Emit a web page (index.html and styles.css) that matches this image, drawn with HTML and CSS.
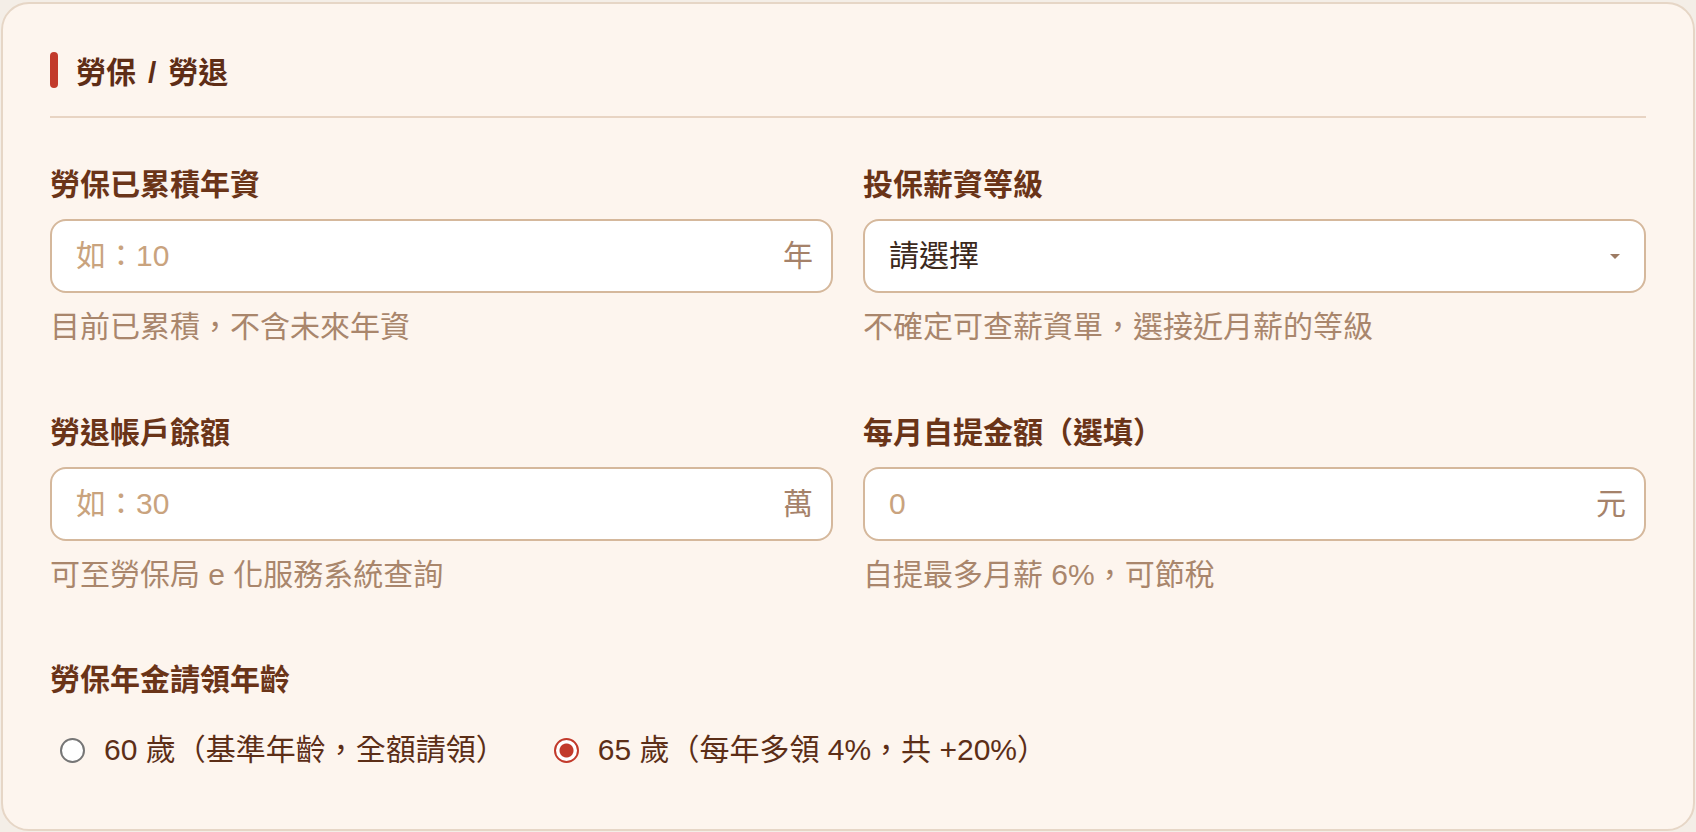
FILE: index.html
```html
<!DOCTYPE html>
<html lang="zh-Hant">
<head>
<meta charset="utf-8">
<title>勞保 / 勞退</title>
<link rel="stylesheet" href="styles.css">
</head>
<body>
<section class="card">
  <header class="card-header">
    <span class="accent-bar"></span>
    <h2 class="card-title">勞保<span class="sep">/</span>勞退</h2>
  </header>

  <div class="field-grid">
    <div class="field">
      <label class="field-label" for="years">勞保已累積年資</label>
      <div class="input-box">
        <input id="years" class="text-input" type="text" placeholder="如：10">
        <span class="suffix">年</span>
      </div>
      <p class="hint">目前已累積，不含未來年資</p>
    </div>

    <div class="field">
      <label class="field-label" for="grade">投保薪資等級</label>
      <div class="input-box">
        <select id="grade" class="select-input">
          <option>請選擇</option>
        </select>
        <svg class="select-arrow" width="10" height="5" viewBox="0 0 10 5" aria-hidden="true"><path d="M0 0H10L5 5Z"/></svg>
      </div>
      <p class="hint">不確定可查薪資單，選接近月薪的等級</p>
    </div>

    <div class="field">
      <label class="field-label" for="balance">勞退帳戶餘額</label>
      <div class="input-box">
        <input id="balance" class="text-input" type="text" placeholder="如：30">
        <span class="suffix">萬</span>
      </div>
      <p class="hint">可至勞保局 e 化服務系統查詢</p>
    </div>

    <div class="field">
      <label class="field-label" for="self">每月自提金額（選填）</label>
      <div class="input-box">
        <input id="self" class="text-input" type="text" placeholder="0">
        <span class="suffix">元</span>
      </div>
      <p class="hint">自提最多月薪 6%，可節稅</p>
    </div>
  </div>

  <div class="age-section">
    <div class="section-label">勞保年金請領年齡</div>
    <div class="radio-group">
      <label class="radio-option">
        <input class="radio" type="radio" name="age" value="60">
        <span>60 歲（基準年齡，全額請領）</span>
      </label>
      <label class="radio-option">
        <input class="radio" type="radio" name="age" value="65" checked>
        <span>65 歲（每年多領 4%，共 +20%）</span>
      </label>
    </div>
  </div>
</section>
</body>
</html>
```

FILE: styles.css
```css
* { box-sizing: border-box; }

html, body {
  margin: 0;
  padding: 0;
}

body {
  background: #f4eee7;
  font-family: "Liberation Sans", "Noto Sans CJK TC", sans-serif;
  font-size: 30px;
  line-height: 42px;
  overflow: hidden;
}

.card {
  margin: 2px 1px 0 1px;
  height: 829px;
  background: #fdf5ee;
  border: 2px solid #e6d6c6;
  border-radius: 28px;
  padding: 45px 47px 0 47px;
}

.card-header {
  display: flex;
  align-items: center;
  gap: 18px;
  padding-bottom: 25px;
  border-bottom: 2px solid #e8d4c3;
}

.accent-bar {
  width: 8px;
  height: 36px;
  border-radius: 4px;
  background: #c23a2b;
  flex: none;
}

.card-title {
  margin: 0;
  height: 42px;
  font-size: 30px;
  line-height: 48px;
  font-weight: 700;
  color: #5e2d16;
}

.sep {
  margin: 0 12px;
}

.field-grid {
  margin-top: 44px;
  display: grid;
  grid-template-columns: 1fr 1fr;
  column-gap: 30px;
  row-gap: 62px;
}

.field {
  display: flex;
  flex-direction: column;
}

.field-label,
.section-label {
  display: block;
  font-weight: 700;
  color: #6a3418;
  line-height: 42px;
}

.field-label {
  padding-top: 2px;
}

.input-box {
  margin-top: 13px;
  height: 74px;
  display: flex;
  align-items: center;
  background: #ffffff;
  border: 2px solid #d5b89c;
  border-radius: 16px;
  padding: 0 18px 0 24px;
}

.text-input,
.select-input {
  flex: 1;
  min-width: 0;
  border: none;
  outline: none;
  background: transparent;
  font: inherit;
  color: #3b281b;
  padding: 0;
  height: 100%;
}

.text-input::placeholder {
  color: #c9a37e;
  opacity: 1;
}

.select-input {
  appearance: none;
  -webkit-appearance: none;
  cursor: pointer;
}

.select-arrow {
  flex: none;
  fill: #9d7b63;
  margin-right: 6px;
}

.suffix {
  flex: none;
  color: #a5826a;
}

.hint {
  margin: 13px 0 0 0;
  color: #a9866c;
  line-height: 42px;
}

.age-section {
  margin-top: 63px;
}

.radio-group {
  margin-top: 28px;
  display: flex;
  align-items: center;
  gap: 48px;
  padding-left: 10px;
}

.radio-option {
  display: flex;
  align-items: center;
  gap: 19px;
  color: #5c2e17;
  cursor: pointer;
}

.radio {
  appearance: none;
  -webkit-appearance: none;
  margin: 0;
  width: 25px;
  height: 25px;
  border-radius: 50%;
  border: 2px solid #767676;
  background: #ffffff;
  flex: none;
}

.radio:checked {
  border-color: #c23a2b;
  background: radial-gradient(circle, #c23a2b 0 6.5px, #ffffff 7.5px);
}
```
